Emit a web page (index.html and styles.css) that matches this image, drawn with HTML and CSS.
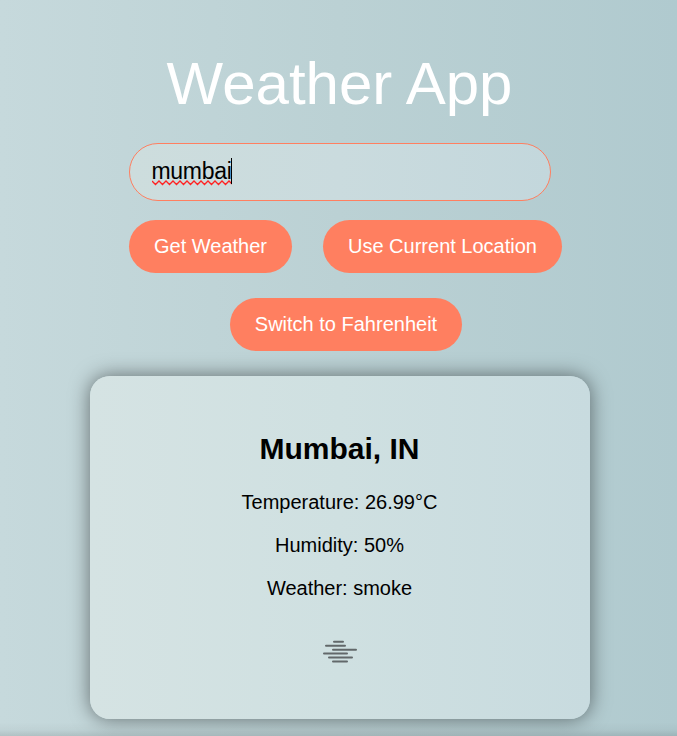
FILE: index.html
```html
<!DOCTYPE html>
<html lang="en">
<head>
<meta charset="utf-8">
<title>Weather App</title>
<link rel="stylesheet" href="styles.css">
</head>
<body>
<main class="app">
  <h1 class="title">Weather App</h1>
  <div class="search"><span class="query">mumbai<svg class="squiggle" width="80" height="6" viewBox="0 0 80 6"><path d="M0 1L3.5 4.5L7 1L10.5 4.5L14 1L17.5 4.5L21 1L24.5 4.5L28 1L31.5 4.5L35 1L38.5 4.5L42 1L45.5 4.5L49 1L52.5 4.5L56 1L59.5 4.5L63 1L66.5 4.5L70 1L73.5 4.5L77 1L80 4"/></svg></span><span class="caret"></span></div>
  <div class="actions"><button class="btn get">Get Weather</button><button class="btn locate">Use Current Location</button></div>
  <button class="btn switch">Switch to Fahrenheit</button>
  <section class="card">
    <h2>Mumbai, IN</h2>
    <p>Temperature: 26.99°C</p>
    <p>Humidity: 50%</p>
    <p>Weather: smoke</p>
    <svg class="mist" width="36" height="24" viewBox="0 0 36 24"><path d="M12 1.7h9M4 5.7h19M11 9.8h23M2 13.6h23M7 17.5h23M11 21.4h14"/></svg>
  </section>
</main>
</body>
</html>
```
FILE: styles.css
```css
* { box-sizing: border-box; }
body {
  margin: 0;
  min-height: 736px;
  overflow: hidden;
  font-family: "Liberation Sans", Arial, sans-serif;
  background:
    linear-gradient(to top, rgba(0,0,0,.11), rgba(0,0,0,.03) 6px, transparent 14px),
    linear-gradient(to right, #c6d9dc, #bbd1d4 50%, #b0cacf);
}
.app { display: flex; flex-direction: column; align-items: center; width: 679px; height: 736px; padding-top: 49px; }
.title { margin: 0; height: 70px; line-height: 70px; font-size: 60px; font-weight: 400; color: #fff; }
.search { display: flex; align-items: center; width: 422px; height: 58px; margin-top: 24px; padding: 0 22px 2px; border: 1px solid #ff7f60; border-radius: 29px; background: linear-gradient(to right, #cddddd, #cadbde 50%, #c3d7dc); font-size: 23px; letter-spacing: -.3px; }
.query { position: relative; width: 80px; margin-right: -1px; }
.squiggle { position: absolute; left: 0; top: 22px; fill: none; stroke: #f22; stroke-width: 1.3; }
.caret { position: relative; width: 1px; height: 26px; background: #000; }
.actions { display: flex; gap: 31px; width: 433px; margin: 19px 0 25px 12px; }
.btn { flex: none; height: 53px; padding: 0; border: 0; border-radius: 27px; background: #ff7f60; color: #fff; font: 20px "Liberation Sans", Arial, sans-serif; }
.get { width: 163px; }
.locate { width: 239px; }
.switch { width: 232px; margin-left: 13px; }
.card { display: flex; flex-direction: column; align-items: center; width: 500px; height: 343px; margin-top: 25px; padding-top: 55px; border-radius: 20px; background: linear-gradient(to right, #d5e3e3, #cfe0e1 50%, #c8dbdf); box-shadow: 0 0 20px rgba(0,0,0,.5); }
.card h2 { margin: 0 0 24px; font-size: 30px; line-height: 36px; }
.card p { margin: 0 0 20px; font-size: 20px; line-height: 23px; }
.mist { margin-top: 20px; fill: none; stroke: #62686a; stroke-width: 2; stroke-linecap: round; }
```
